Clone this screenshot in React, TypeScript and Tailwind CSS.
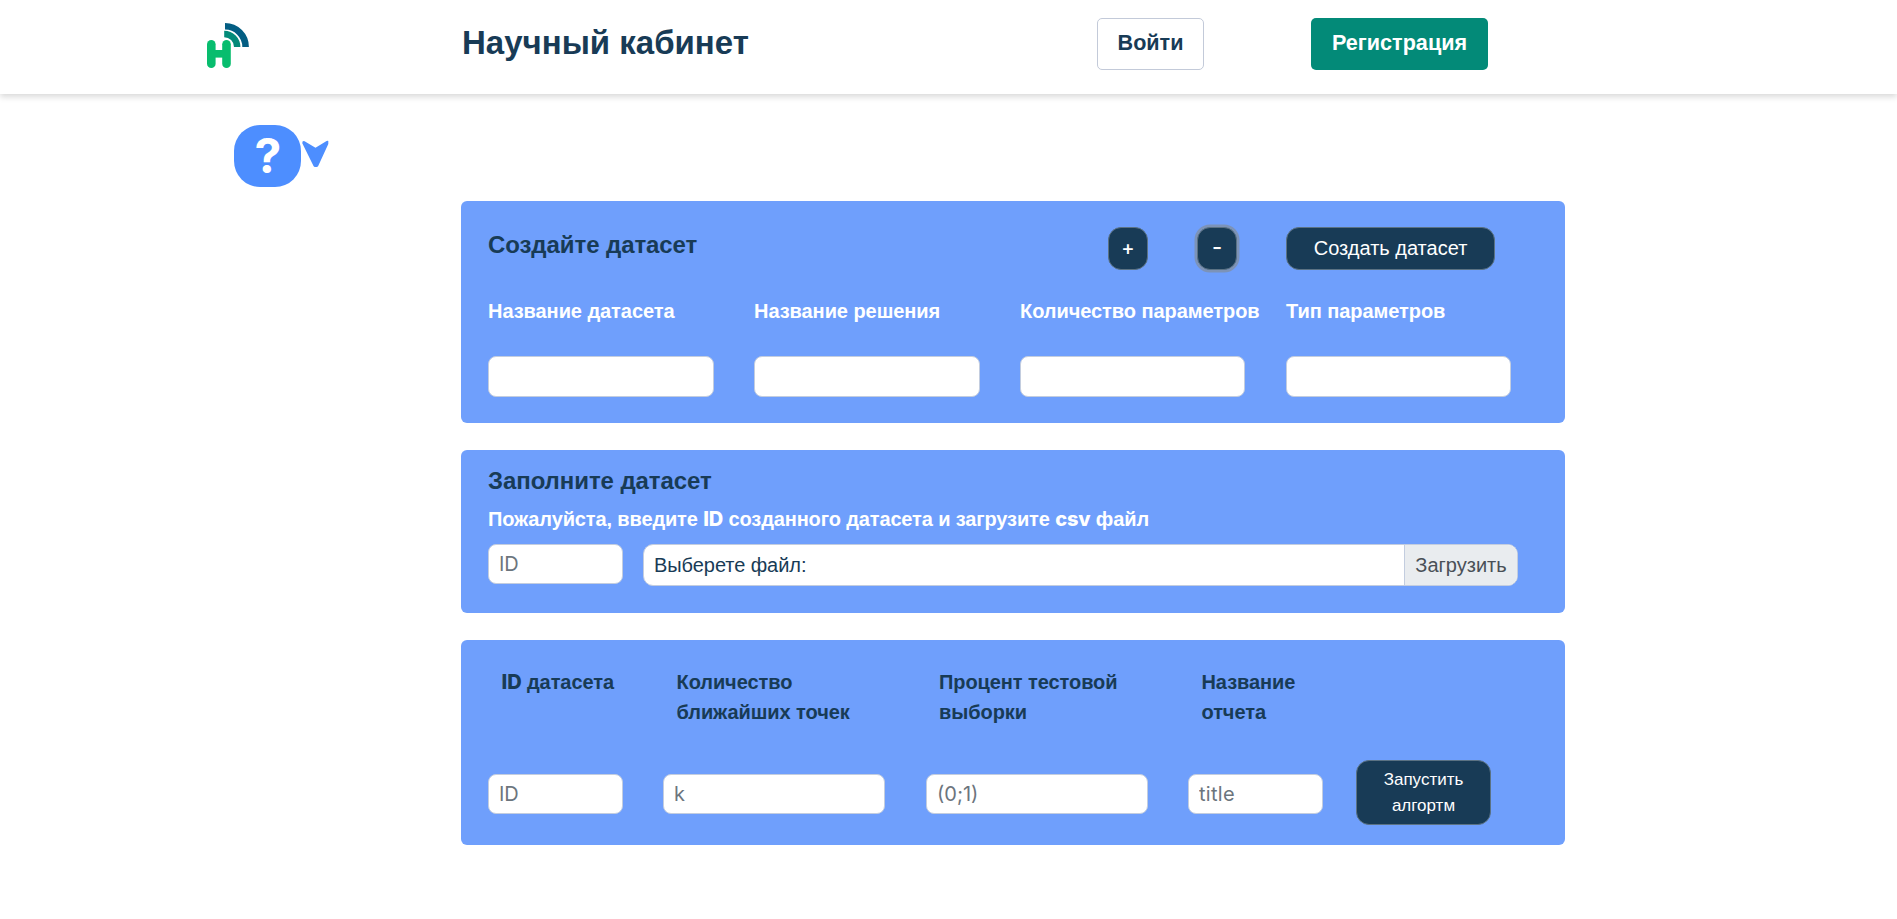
import React from "react";

function Logo() {
  return (
    <svg className="mt-[23px] h-[45px] w-[42px] shrink-0" viewBox="0 0 42 45" fill="none" aria-hidden="true">
      <rect x="0" y="17" width="8.6" height="28" rx="4.3" fill="#08bd6e" />
      <rect x="15.2" y="17" width="8.6" height="28" rx="4.3" fill="#08bd6e" />
      <rect x="4" y="27" width="16" height="7.6" fill="#08bd6e" />
      <path d="M17.2 11A13 13 0 0 1 30.2 24" stroke="#038a78" strokeWidth="6.4" />
      <path d="M18 3.3A20.6 20.6 0 0 1 38.6 24" stroke="#035e83" strokeWidth="6.6" />
    </svg>
  );
}

function Latin({ className = "", children }: { className?: string; children: React.ReactNode }) {
  return <span className={`font-['Inter',sans-serif] leading-none ${className}`}>{children}</span>;
}

function TextField({ className, placeholder }: { className: string; placeholder?: string }) {
  return (
    <input
      type="text"
      placeholder={placeholder}
      className={`block rounded-lg border border-[#c3cddf] bg-white px-[10px] font-['Inter',sans-serif] text-[20px] text-[#183b56] outline-none placeholder:text-[#6c757d] ${className}`}
    />
  );
}

function DarkButton({ className, children }: { className: string; children: React.ReactNode }) {
  return (
    <button
      type="button"
      className={`flex shrink-0 items-center justify-center border border-[#5b7283] bg-[#183b56] text-white ${className}`}
    >
      {children}
    </button>
  );
}

const columns = [
  { label: "Название датасета", width: "w-[226px]" },
  { label: "Название решения", width: "w-[226px]" },
  { label: "Количество параметров", width: "w-[225px]" },
  { label: "Тип параметров", width: "w-[225px]" },
];

export default function App() {
  return (
    <div className="min-h-screen bg-white font-['Liberation_Sans',Arial,sans-serif] text-[#183b56]">
      <header className="flex h-[94px] items-start bg-white pl-[207px] shadow-[0_3px_6px_rgba(0,0,0,0.15)]">
        <Logo />
        <h1 className="ml-[213px] mt-[18px] w-[635px] text-[33px] font-bold leading-[50px]">Научный кабинет</h1>
        <button
          type="button"
          className="mt-[18px] flex h-[52px] w-[107px] items-center justify-center rounded-[5px] border border-[#c3cad9] bg-white pb-[1px] text-[21.6px] font-bold"
        >
          Войти
        </button>
        <button
          type="button"
          className="ml-[107px] mt-[18px] flex h-[52px] w-[177px] items-center justify-center rounded-[5px] bg-[#038a78] pb-[1px] text-[21.6px] font-bold text-white"
        >
          Регистрация
        </button>
      </header>

      <main className="pt-[31px]">
        <div className="flex h-[76px] items-start pl-[234px]">
          <button
            type="button"
            className="flex h-[62px] w-[67px] items-center justify-center rounded-[26px] bg-[#4d8eff] pl-px font-['Inter',sans-serif] text-[48px] font-bold leading-none text-white"
          >
            ?
          </button>
          <svg className="ml-px mt-[15px] h-[28px] w-[27px]" viewBox="0 0 27 28" fill="#4d8eff" aria-hidden="true">
            <path d="M.3 3.2Q0 .6 2.6 1.2L13.5 7.8 24.6 1Q26 .4 26.3 1V4L16.2 26Q15.6 27 14.6 27H13Q12 27 11.5 26Z" />
          </svg>
        </div>

        <div className="ml-[461px] flex w-[1104px] flex-col gap-[27px]">
          <section className="h-[222px] rounded-[6px] bg-[#6f9ffc] px-[27px] pt-[26px]">
            <div className="flex h-[43px] items-start">
              <h2 className="w-[620px] text-2xl font-bold leading-[36px] tracking-[-0.08px]">Создайте датасет</h2>
              <DarkButton className="h-[43px] w-[40px] rounded-[13px] pb-[2px] text-[20px] font-medium">
                <Latin>+</Latin>
              </DarkButton>
              <DarkButton className="ml-[49px] h-[43px] w-[40px] rounded-[13px] pb-[3px] text-[22px] font-medium ring-[2.5px] ring-[#7c93b8]">
                <Latin>-</Latin>
              </DarkButton>
              <DarkButton className="ml-[49px] h-[43px] w-[209px] rounded-[13px] pb-[2px] text-[20px]">Создать датасет</DarkButton>
            </div>
            <div className="mt-[26px] flex">
              {columns.map((c) => (
                <label key={c.label} className="block w-[266px] shrink-0">
                  <span className="block whitespace-nowrap text-[20px] font-bold leading-[30px] tracking-[-0.06px] text-white">
                    {c.label}
                  </span>
                  <TextField className={`mt-[30px] h-[41px] ${c.width}`} />
                </label>
              ))}
            </div>
          </section>

          <section className="h-[163px] rounded-[6px] bg-[#6f9ffc] px-[27px] pt-[13px]">
            <h2 className="text-2xl font-bold leading-[36px] tracking-[-0.08px]">Заполните датасет</h2>
            <p className="mt-[5px] text-[20px] font-bold leading-[30px] tracking-[-0.13px] text-white">
              Пожалуйста, введите <Latin className="font-extrabold">ID</Latin> созданного датасета и загрузите{" "}
              <Latin className="font-extrabold">csv</Latin> файл
            </p>
            <div className="mt-[10px] flex items-start">
              <TextField className="h-[40px] w-[135px]" placeholder="ID" />
              <div className="ml-[20px] flex h-[42px] w-[875px] overflow-hidden rounded-[10px] border border-[#c3cddf] bg-white text-[20px]">
                <span className="flex flex-1 items-center pl-[10px] tracking-[-0.06px]">Выберете файл:</span>
                <button
                  type="button"
                  className="flex w-[113px] items-center justify-center border-l border-[#c3cddf] bg-[#e9ecef] text-[#495057]"
                >
                  Загрузить
                </button>
              </div>
            </div>
          </section>

          <section className="h-[205px] rounded-[6px] bg-[#6f9ffc] px-[27px] pt-[27px]">
            <div className="flex text-[20px] font-bold leading-[30px] tracking-[-0.08px]">
              <div className="w-[175px] pl-[13.5px]">
                <Latin className="font-extrabold">ID</Latin> датасета
              </div>
              <div className="w-[263px] pl-[13.5px]">
                Количество
                <br />
                ближайших точек
              </div>
              <div className="w-[262px] pl-[13px]">
                Процент тестовой
                <br />
                выборки
              </div>
              <div className="pl-[13.5px]">
                Название
                <br />
                отчета
              </div>
            </div>
            <div className="mt-[33px] flex items-start">
              <TextField className="mt-[14px] h-[40px] w-[135px]" placeholder="ID" />
              <TextField className="ml-[40px] mt-[14px] h-[40px] w-[222px]" placeholder="k" />
              <TextField className="ml-[41px] mt-[14px] h-[40px] w-[222px]" placeholder="(0;1)" />
              <TextField className="ml-[40px] mt-[14px] h-[40px] w-[135px] tracking-[0.3px]" placeholder="title" />
              <DarkButton className="ml-[33px] h-[65px] w-[135px] rounded-[13px] text-[17px] leading-[26px]">
                <span>
                  Запустить
                  <br />
                  алгортм
                </span>
              </DarkButton>
            </div>
          </section>
        </div>
      </main>
    </div>
  );
}
